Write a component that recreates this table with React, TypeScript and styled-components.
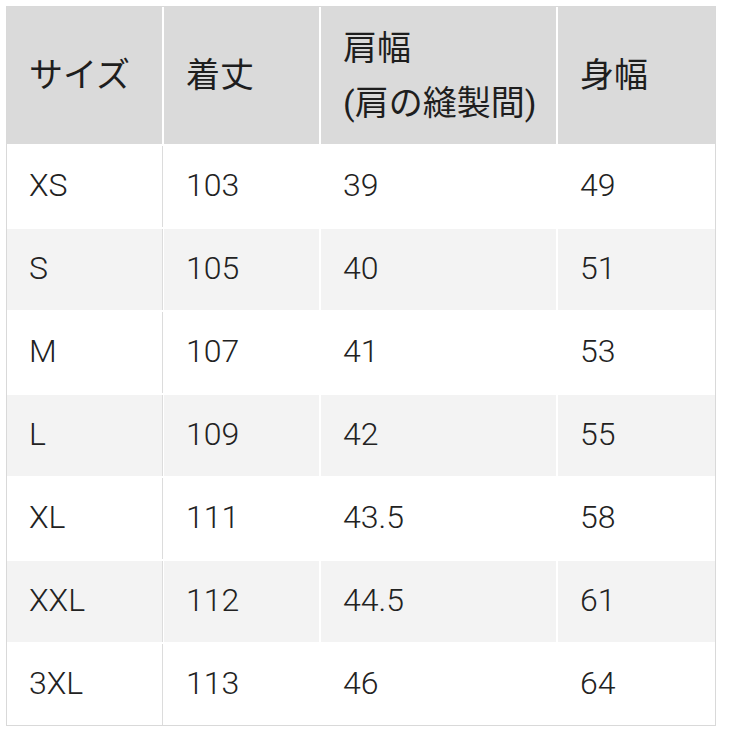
import React from "react";
import styled, { createGlobalStyle } from "styled-components";

const Global = createGlobalStyle`
  html, body { margin: 0; padding: 0; background: #ffffff; }
  body { font-family: Roboto, "Noto Sans CJK JP", sans-serif; }
`;

const Page = styled.div`
  padding: 6px 0 0 6px;
`;

const Table = styled.div`
  display: grid;
  grid-template-columns: 155px 155px 235px 157px;
  grid-auto-rows: 81px;
  grid-template-rows: 137px;
  column-gap: 2px;
  row-gap: 2px;
  width: max-content;
  border: 1px solid #d9d9d9;
  background: #ffffff;
`;

const HeadCell = styled.div`
  display: flex;
  align-items: center;
  padding-left: 22px;
  background: #dadada;
  color: #1e1e1e;
  font-family: Roboto, "Noto Sans CJK JP", sans-serif;
  font-size: 34px;
  line-height: 55px;
`;

const Cell = styled.div<{ $striped: boolean; $first: boolean }>`
  display: flex;
  align-items: center;
  padding-left: 22px;
  padding-bottom: 3px;
  background: ${(p) => (p.$striped ? "#f3f3f3" : "#ffffff")};
  box-shadow: ${(p) => (p.$first ? "1px 0 0 #dcdcdc" : "none")};
  color: #222222;
  font-family: Roboto, sans-serif;
  font-weight: 300;
  font-size: 32px;
`;

const headers: React.ReactNode[] = [
  "サイズ",
  "着丈",
  <>
    肩幅
    <br />
    (肩の縫製間)
  </>,
  "身幅",
];

const rows: string[][] = [
  ["XS", "103", "39", "49"],
  ["S", "105", "40", "51"],
  ["M", "107", "41", "53"],
  ["L", "109", "42", "55"],
  ["XL", "111", "43.5", "58"],
  ["XXL", "112", "44.5", "61"],
  ["3XL", "113", "46", "64"],
];

export default function App() {
  return (
    <>
      <Global />
      <Page>
        <Table>
          {headers.map((h, i) => (
            <HeadCell key={`h${i}`}>
              <span>{h}</span>
            </HeadCell>
          ))}
          {rows.map((r, ri) =>
            r.map((v, ci) => (
              <Cell key={`${ri}-${ci}`} $striped={ri % 2 === 1} $first={ci === 0}>
                {v}
              </Cell>
            ))
          )}
        </Table>
      </Page>
    </>
  );
}
